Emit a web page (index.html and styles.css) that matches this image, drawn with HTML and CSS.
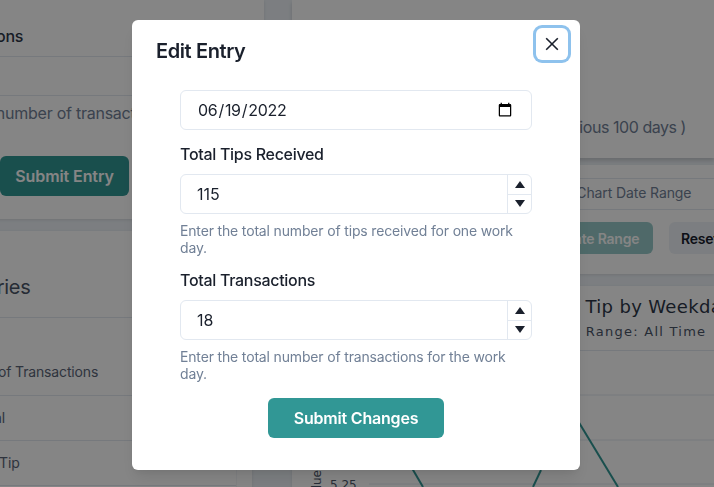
FILE: index.html
```html
<!DOCTYPE html>
<html lang="en">
<head>
<meta charset="utf-8">
<title>Edit Entry</title>
<link rel="stylesheet" href="styles.css">
</head>
<body>
<div class="page">
  <div class="col-left">
    <section class="card card-entry">
      <div class="row row-label"><span class="row-text">Total Transactions</span></div>
      <div class="row row-input"></div>
      <p class="hint-bg">Enter the total number of transactions for the work day.</p>
      <button class="btn-bg" type="button">Submit Entry</button>
    </section>
    <section class="card card-summary">
      <h2 class="summary-title"><span class="summary-text">Entry Summaries</span></h2>
      <div class="table">
        <div class="tr tr-first">Number of Transactions</div>
        <div class="tr">Tips Total</div>
        <div class="tr">Average Tip</div>
      </div>
    </section>
  </div>
  <div class="col-right">
    <section class="card card-prev"><span>( Previous 100 days )</span></section>
    <section class="card card-range">
      <div class="range-label">Update Chart Date Range</div>
      <div class="range-actions">
        <button class="btn-range" type="button">Update Range</button>
        <button class="btn-reset" type="button">Reset Range</button>
      </div>
    </section>
    <section class="card card-chart">
      <header class="chart-head">
        <h2 class="chart-title">Average Tip by Weekday</h2>
        <p class="chart-sub">Chart Date Range: All Time</p>
      </header>
      <svg class="chart" width="422" height="136" viewBox="0 0 422 136">
        <g class="grid">
          <line x1="77" y1="44" x2="422" y2="44"/>
          <line x1="77" y1="89" x2="422" y2="89"/>
          <line x1="77" y1="133" x2="422" y2="133"/>
        </g>
        <g class="trend">
          <polyline points="110,100 131,136"/>
          <polyline points="241,136 249,119"/>
          <polyline points="280,60 326,136"/>
        </g>
        <text class="tick" x="38" y="138">5.25</text>
        <text class="axis" transform="translate(29 152) rotate(-90)" x="0" y="0">Value</text>
      </svg>
    </section>
  </div>
</div>

<div class="overlay">
  <div class="modal" role="dialog" aria-labelledby="modal-title">
    <header class="modal-head">
      <h1 class="modal-title" id="modal-title">Edit Entry</h1>
      <button class="close" type="button" aria-label="Close">
        <svg width="14" height="14" viewBox="0 0 14 14"><path d="M1.2 1.2 12.8 12.8M12.8 1.2 1.2 12.8"/></svg>
      </button>
    </header>
    <form class="form">
      <input class="field date" type="date" value="2022-06-19">
      <label class="label" for="tips">Total Tips Received</label>
      <div class="number">
        <input class="number-input" id="tips" type="text" value="115">
        <div class="stepper">
          <span class="step"><svg width="10" height="7" viewBox="0 0 10 7"><path d="M5 0 10 7H0Z"/></svg></span>
          <span class="step"><svg width="10" height="7" viewBox="0 0 10 7"><path d="M0 0H10L5 7Z"/></svg></span>
        </div>
      </div>
      <p class="help">Enter the total number of tips received for one work day.</p>
      <label class="label" for="trans">Total Transactions</label>
      <div class="number">
        <input class="number-input" id="trans" type="text" value="18">
        <div class="stepper">
          <span class="step"><svg width="10" height="7" viewBox="0 0 10 7"><path d="M5 0 10 7H0Z"/></svg></span>
          <span class="step"><svg width="10" height="7" viewBox="0 0 10 7"><path d="M0 0H10L5 7Z"/></svg></span>
        </div>
      </div>
      <p class="help">Enter the total number of transactions for the work day.</p>
      <button class="submit" type="button">Submit Changes</button>
    </form>
  </div>
</div>
</body>
</html>
```

FILE: styles.css
```css
* { box-sizing: border-box; }

html, body {
  margin: 0;
  height: 487px;
  overflow: hidden;
}

body {
  font-family: Inter, "Liberation Sans", sans-serif;
  color: #1a202c;
  background: #edf2f7;
}

h1, h2, p { margin: 0; }

button { font-family: inherit; border: 0; }

/* Background page */
.page {
  display: flex;
  height: 487px;
  overflow: hidden;
  background: #edf2f7;
}

.col-left {
  flex: none;
  width: 338px;
  margin-left: -74px;
  display: flex;
  flex-direction: column;
  gap: 12px;
}

.col-right {
  flex: none;
  width: 422px;
  margin-left: 28px;
  display: flex;
  flex-direction: column;
  gap: 7px;
}

.card {
  background: #fff;
  box-shadow: 0 1px 3px rgba(0, 0, 0, 0.1);
}

.card-entry { height: 220px; }

.row { border-bottom: 1px solid #e2e8f0; }

.row-label {
  height: 57px;
  padding-top: 24px;
  font-size: 16px;
  line-height: 24px;
  font-weight: 500;
  letter-spacing: -0.3px;
  color: #2d3748;
}

.row-text {
  display: block;
  margin-left: -38px;
}

.row-input { height: 39px; }

.hint-bg {
  margin: 5px 0 0 -36px;
  width: 600px;
  font-size: 16px;
  line-height: 24px;
  letter-spacing: -0.25px;
  color: #718096;
}

.btn-bg {
  display: block;
  margin: 31px 0 0 74px;
  width: 129px;
  height: 40px;
  border-radius: 6px;
  background: #319795;
  color: #fff;
  font-size: 16px;
  font-weight: 600;
  letter-spacing: -0.1px;
}

.card-summary {
  width: 326px;
  flex: 1;
}

.summary-title {
  height: 87px;
  padding-top: 41px;
  font-size: 20px;
  line-height: 30px;
  font-weight: 400;
  letter-spacing: -0.3px;
  color: #4a5568;
  border-bottom: 1px solid #e2e8f0;
  white-space: nowrap;
}

.summary-text {
  display: block;
  margin-left: -52px;
}

.table {
  width: 311px;
  height: 169px;
  border-right: 1px solid #f3f5f8;
  font-size: 14px;
  letter-spacing: -0.15px;
  color: #5a6578;
}

.tr {
  height: 45px;
  padding: 12px 0 0 16px;
  line-height: 20px;
  border-bottom: 1px solid #e2e8f0;
}

.tr-first {
  height: 78px;
  padding-top: 44px;
}

.card-prev {
  height: 158px;
  flex: none;
  display: flex;
  justify-content: flex-end;
  padding: 115px 28px 0 0;
  font-size: 16px;
  line-height: 24px;
  letter-spacing: -0.45px;
  color: #718096;
  box-shadow: 0 3px 4px rgba(0, 0, 0, 0.15);
}

.card-range {
  height: 109px;
  flex: none;
  margin-bottom: 5px;
  padding-top: 13px;
}

.range-label {
  height: 32px;
  padding: 4px 0 0 233px;
  border-top: 1px solid #e2e8f0;
  border-bottom: 1px solid #e2e8f0;
  font-size: 14px;
  line-height: 20px;
  letter-spacing: -0.1px;
  color: #718096;
}

.range-actions {
  display: flex;
  gap: 16px;
  margin-top: 12px;
  padding-left: 241px;
}

.btn-range, .btn-reset {
  flex: none;
  height: 32px;
  padding: 0;
  border-radius: 6px;
  font-size: 14px;
  font-weight: 600;
  letter-spacing: -0.2px;
}

.btn-range {
  width: 120px;
  background: #319795;
  color: #fff;
  opacity: 0.5;
}

.btn-reset {
  width: 106px;
  background: #edf2f7;
  color: #1a202c;
  white-space: nowrap;
}

.card-chart { flex: 1; }

.chart-head {
  height: 65px;
  padding: 8px 0 0 309px;
  border-bottom: 1px solid #e2e8f0;
  white-space: nowrap;
  font-family: "DejaVu Sans", sans-serif;
  margin-left: -98px;
}

.chart-title {
  font-size: 18px;
  line-height: 26px;
  font-weight: 400;
  letter-spacing: 0.35px;
  color: #2d3748;
}

.chart-sub {
  margin: 4px 0 0 -6px;
  font-size: 13px;
  line-height: 16px;
  letter-spacing: 1.25px;
  color: #4a5568;
}

.chart { display: block; }

.grid line { stroke: #e2e8f0; stroke-width: 1; }

.trend polyline {
  fill: none;
  stroke: #319795;
  stroke-width: 2;
}

.tick, .axis {
  font-family: "DejaVu Sans", sans-serif;
  font-size: 12px;
  fill: #4a5568;
}

/* Modal */
.overlay {
  position: fixed;
  inset: 0;
  background: rgba(0, 0, 0, 0.48);
  padding: 20px 0 0 132px;
}

.modal {
  width: 448px;
  height: 450px;
  background: #fff;
  border-radius: 6px;
  box-shadow: 0 10px 15px -3px rgba(0, 0, 0, 0.1), 0 4px 6px -2px rgba(0, 0, 0, 0.05);
}

.modal-head {
  display: flex;
  justify-content: space-between;
  align-items: flex-start;
  height: 62px;
  padding: 8px 12px 0 24px;
}

.modal-title {
  padding-top: 8px;
  font-size: 20px;
  line-height: 30px;
  font-weight: 600;
  letter-spacing: -0.4px;
}

.close {
  display: flex;
  align-items: center;
  justify-content: center;
  width: 32px;
  height: 32px;
  padding: 0;
  background: #fff;
  border-radius: 6px;
  box-shadow: 0 0 0 3px rgba(66, 153, 225, 0.6);
}

.close path {
  fill: none;
  stroke: #1a202c;
  stroke-width: 1.6;
}

.form {
  display: flex;
  flex-direction: column;
  padding: 8px 48px 0;
}

.field, .number {
  width: 352px;
  height: 40px;
  border: 1px solid #e2e8f0;
  border-radius: 6px;
  background: #fff;
}

.date {
  padding: 0 16px;
  font-family: inherit;
  font-size: 16px;
  letter-spacing: -0.3px;
  color: #1a202c;
  outline: none;
}

.label {
  margin: 12px 0 8px;
  font-size: 16px;
  line-height: 24px;
  font-weight: 500;
  letter-spacing: -0.3px;
  color: #1a202c;
}

.number {
  display: flex;
  overflow: hidden;
}

.number-input {
  flex: 1;
  min-width: 0;
  border: 0;
  padding: 0 16px;
  outline: none;
  background: transparent;
  font-family: inherit;
  font-size: 16px;
  color: #1a202c;
}

.stepper {
  flex: none;
  width: 24px;
  display: flex;
  flex-direction: column;
  border-left: 1px solid #e2e8f0;
}

.step {
  flex: 1;
  display: flex;
  align-items: center;
  justify-content: center;
}

.step + .step { border-top: 1px solid #e2e8f0; }

.step path { fill: #1a202c; }

.help {
  margin-top: 8px;
  font-size: 14px;
  line-height: 17px;
  letter-spacing: -0.16px;
  color: #718096;
}

.submit {
  align-self: center;
  margin-top: 16px;
  width: 176px;
  height: 40px;
  border-radius: 6px;
  background: #319795;
  color: #fff;
  font-size: 16px;
  font-weight: 600;
  letter-spacing: -0.2px;
}
```
